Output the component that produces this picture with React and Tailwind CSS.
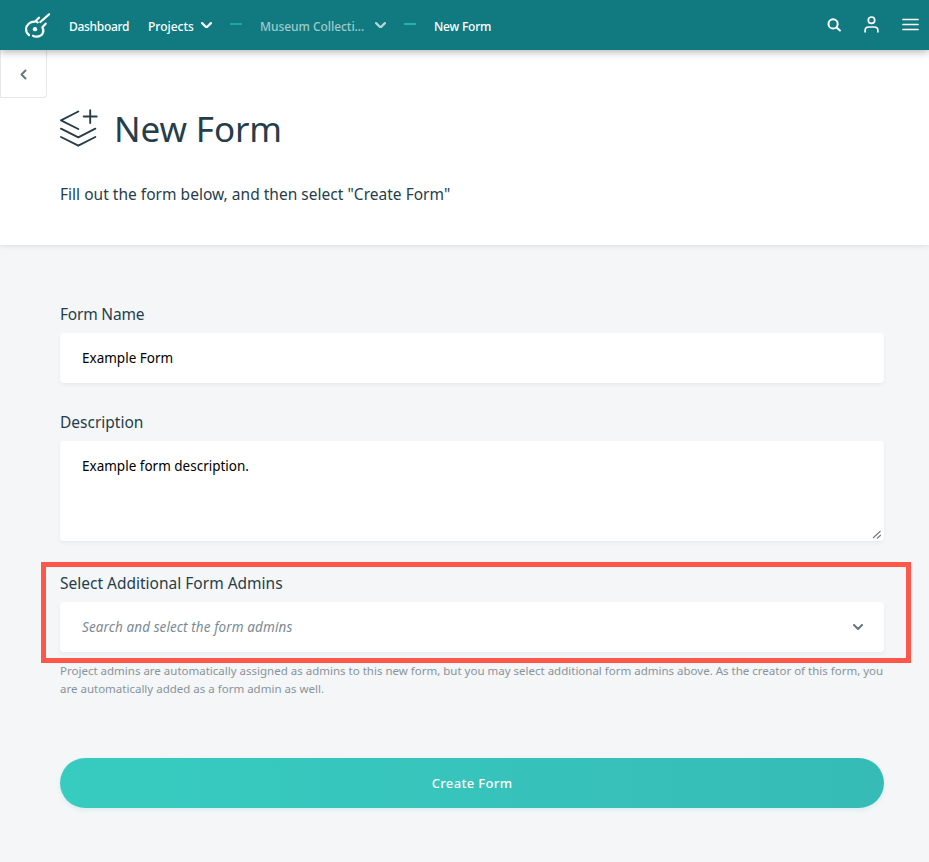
const Chevron = ({ className, w = 10, sw = 2 }) => (
  <svg className={className} width={w} height={w * 0.6} viewBox="0 0 10 6" fill="none" stroke="currentColor" strokeWidth={sw} strokeLinecap="round" strokeLinejoin="round">
    <path d="M1 1l4 4 4-4" />
  </svg>
);

const Logo = () => (
  <svg className="ml-6 block shrink-0" width="27" height="27" viewBox="0 0 81 81" fill="none" stroke="white" strokeWidth="6.5" strokeLinecap="round" strokeLinejoin="round">
    <path d="M15 69C8 64 6 58 6 51C7 38 18 29 31 29C34 29 35 27 37 25L45 17M36 28L41 31" />
    <path d="M75 7L49 30" />
    <path d="M65 35L55 46C62 57 57 73 38 74C33 74 29 73 27 71" />
    <circle cx="33" cy="51.5" r="6.5" fill="white" stroke="none" />
  </svg>
);

export default function App() {
  return (
    <div className="h-[862px] w-[929px] overflow-hidden bg-[#f4f6f8] font-['Noto_Sans',sans-serif] text-[#263e4a]">
      <header className="relative flex h-[50px] items-center bg-[#107a80] text-[12px] font-medium text-white shadow-[0_2px_8px_rgba(0,0,0,0.3)]">
        <Logo />
        <span className="ml-[18px] w-[79px] whitespace-nowrap pt-[3px] tracking-[-0.3px]"><span>Dashboard</span></span>
        <span className="w-[53px] whitespace-nowrap pt-[3px]"><span>Projects</span></span>
        <Chevron w={11} />
        <span className="ml-[18px] mt-[-3px] h-[2px] w-3 bg-[#1ba8a0]" />
        <span className="ml-[18px] w-[115px] whitespace-nowrap pt-[3px] tracking-[-0.05px] text-[#9fcaCC]"><span>Museum Collecti...</span></span>
        <Chevron w={11} className="text-[#b7d7d9]" />
        <span className="ml-[18px] mt-[-3px] h-[2px] w-3 bg-[#20b5aa]" />
        <span className="ml-[18px] whitespace-nowrap pt-[3px] tracking-[-0.2px]"><span>New Form</span></span>
        <div className="mb-px ml-auto mr-[10px] flex items-center">
          <svg className="mr-[23px]" width="14" height="14" viewBox="0 0 14 14" fill="none" stroke="white" strokeWidth="2" strokeLinecap="round">
            <circle cx="6.1" cy="5.9" r="4.6" />
            <path d="M9.6 9.4L12.9 12.5" />
          </svg>
          <svg className="mr-[23px]" width="15" height="17" viewBox="0 0 15 17" fill="none" stroke="white" strokeWidth="1.7" strokeLinecap="round">
            <circle cx="7.5" cy="4.2" r="3.2" />
            <path d="M1.1 15.8V14.5C1.1 12.4 2.7 11 4.8 11H10.2C12.3 11 13.9 12.4 13.9 14.5V15.8" />
          </svg>
          <svg width="17" height="13" viewBox="0 0 17 13" stroke="white" strokeWidth="1.7" strokeLinecap="round">
            <path d="M1 1.5H16M1 6.5H16M1 11.5H16" />
          </svg>
        </div>
      </header>

      <section className="flex h-[195px] flex-col bg-white shadow-[0_1px_5px_rgba(0,0,0,0.1)]">
        <button className="flex h-12 w-[47px] items-center justify-center rounded-br-[4px] border border-t-0 border-[#e6e8e9] pr-px pt-px text-[#68777d]">
          <svg width="7" height="11" viewBox="0 0 7 11" fill="none" stroke="currentColor" strokeWidth="2" strokeLinecap="round" strokeLinejoin="round">
            <path d="M5.5 1.5L1.5 5.5L5.5 9.5" />
          </svg>
        </button>
        <div className="ml-[60px] mt-[11px] flex h-[38px] items-center">
          <svg className="block shrink-0" width="38" height="38" viewBox="0 0 38 38" fill="none" stroke="#263e4a" strokeWidth="1.9" strokeLinecap="round" strokeLinejoin="round">
            <path d="M18.3 2.5L1 11.3L18.3 20M1 19.7L18.3 28.3L35.3 19.7M1 28L18.3 36.7L35.3 28M30.2 1.2V14M23.7 7.5H36.7" />
          </svg>
          <h1 className="ml-[16px] whitespace-nowrap pt-px text-[35px] leading-[38px] tracking-[-0.1px]"><span>New Form</span></h1>
        </div>
        <p className="ml-[60px] mt-[35px] whitespace-nowrap text-[15.5px] leading-6 tracking-[0.02px]"><span>Fill out the form below, and then select "Create Form"</span></p>
      </section>

      <main className="px-[60px] pt-[57px]">
        <div className="w-[824px]">
          <label className="block text-[15.5px] leading-6 tracking-[-0.2px]"><span>Form Name</span></label>
          <div className="mt-[7px] flex h-[50px] items-center rounded-[4px] bg-white pl-[22px] text-[13.5px] text-black shadow-[0_2px_4px_rgba(0,0,0,0.05)]"><span>Example Form</span></div>
          <label className="mt-[27px] block text-[15.5px] leading-6"><span>Description</span></label>
          <div className="mt-[7px] flex h-[100px] justify-between rounded-[4px] bg-white pl-[22px] pt-[15px] text-[13.5px] leading-5 text-black shadow-[0_2px_4px_rgba(0,0,0,0.05)]">
            <span>Example form description.</span>
            <svg className="mb-[2px] mr-[2px] self-end" width="10" height="9" viewBox="0 0 10 9" stroke="#777" strokeWidth="1.1"><path d="M1 8L8.5 1M5 8.5L8.8 5" /></svg>
          </div>
          <div className="-ml-[19px] mt-[21px] h-[101px] w-[870px] border-[5px] border-[#ff574a] pl-[14px] pt-[4px]">
            <label className="block text-[15.5px] leading-6"><span>Select Additional Form Admins</span></label>
            <div className="mt-[7px] flex h-[50px] w-[824px] items-center justify-between rounded-[4px] bg-white pl-[22px] pr-[21px] text-[13.5px] italic tracking-[0.1px] text-[#7c8a92] shadow-[0_2px_4px_rgba(0,0,0,0.05)]">
              <span>Search and select the form admins</span>
              <Chevron w={10} className="text-[#68777f]" />
            </div>
          </div>
          <p className="-mt-px whitespace-nowrap text-[11.5px] leading-[18px] text-[#88949b]"><span>Project admins are automatically assigned as admins to this new form, but you may select additional form admins above. As the creator of this form, you</span><br /><span>are automatically added as a form admin as well.</span></p>
          <button className="mt-[60px] flex h-[50px] w-full items-center justify-center rounded-full bg-linear-to-r from-[#37ccc0] to-[#36bbb6] pt-px text-[13px] font-medium tracking-[0.35px] text-white shadow-[0_2px_4px_rgba(30,180,160,0.12)]"><span>Create Form</span></button>
        </div>
      </main>
    </div>
  );
}
